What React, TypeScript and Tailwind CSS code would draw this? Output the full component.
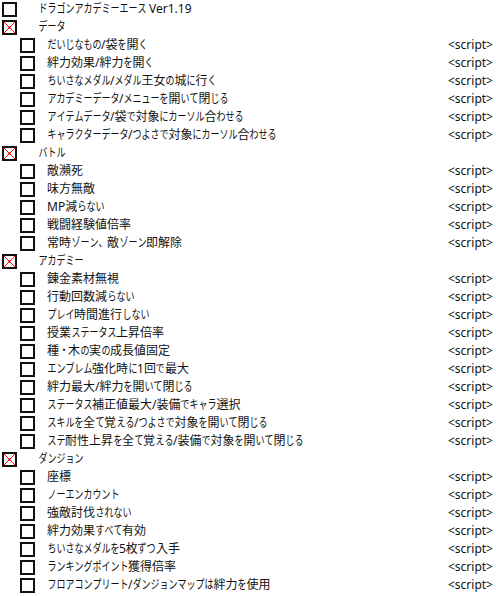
import React from "react";

const sections: { title: string; items: string[] }[] = [
  {
    title: "データ",
    items: [
      "だいじなもの/袋を開く",
      "絆力効果/絆力を開く",
      "ちいさなメダル/メダル王女の城に行く",
      "アカデミーデータ/メニューを開いて閉じる",
      "アイテムデータ/袋で対象にカーソル合わせる",
      "キャラクターデータ/つよさで対象にカーソル合わせる",
    ],
  },
  {
    title: "バトル",
    items: ["敵瀕死", "味方無敵", "MP減らない", "戦闘経験値倍率", "常時ゾーン、敵ゾーン即解除"],
  },
  {
    title: "アカデミー",
    items: [
      "錬金素材無視",
      "行動回数減らない",
      "プレイ時間進行しない",
      "授業ステータス上昇倍率",
      "種・木の実の成長値固定",
      "エンブレム強化時に1回で最大",
      "絆力最大/絆力を開いて閉じる",
      "ステータス補正値最大/装備でキャラ選択",
      "スキルを全て覚える/つよさで対象を開いて閉じる",
      "ステ耐性上昇を全て覚える/装備で対象を開いて閉じる",
    ],
  },
  {
    title: "ダンジョン",
    items: [
      "座標",
      "ノーエンカウント",
      "強敵討伐されない",
      "絆力効果すべて有効",
      "ちいさなメダルを5枚ずつ入手",
      "ランキングポイント獲得倍率",
      "フロアコンプリート/ダンジョンマップは絆力を使用",
    ],
  },
];

function isKana(ch: string) {
  const c = ch.charCodeAt(0);
  return c >= 0x3000 && c <= 0x30ff;
}

function JText({ text }: { text: string }) {
  const chars = Array.from(text);
  const out: React.ReactNode[] = [];
  let buf = "";
  chars.forEach((ch, i) => {
    if (isKana(ch)) {
      if (buf) {
        out.push(<span key={"t" + i}>{buf}</span>);
        buf = "";
      }
      out.push(
        <span key={i} className="inline-block w-[12px] -mx-[1.5px] scale-x-75">
          {ch}
        </span>
      );
    } else {
      buf += ch;
    }
  });
  if (buf) out.push(<span key="end">{buf}</span>);
  return <>{out}</>;
}

function Box({ crossed }: { crossed?: boolean }) {
  return (
    <div className="w-[15px] h-[15px] border-2 border-[#111] bg-white shrink-0 relative">
      {crossed && (
        <svg className="absolute inset-0" width="11" height="11" viewBox="0 0 11 11">
          <line x1="0" y1="0" x2="11" y2="11" stroke="#ff1010" strokeWidth="1" />
          <line x1="11" y1="0" x2="0" y2="11" stroke="#ff1010" strokeWidth="1" />
          <rect x="4.5" y="4.5" width="2" height="2" fill="#c00000" />
        </svg>
      )}
    </div>
  );
}

export default function App() {
  return (
    <div
      className="w-[496px] h-[596px] bg-white text-[12px] text-[#111] overflow-hidden"
      style={{ fontFamily: '"Noto Sans", "Noto Sans CJK JP", sans-serif' }}
    >
      <div className="flex h-[18px] items-center pl-[2px]">
        <Box />
        <span className="ml-[21px] whitespace-nowrap leading-none flex items-center">
          <JText text="ドラゴンアカデミーエース" />
          <span className="ml-[3px]">Ver1.19</span>
        </span>
      </div>
      {sections.map((s) => (
        <div key={s.title}>
          <div className="flex h-[18px] items-center pl-[2px]">
            <Box crossed />
            <span className="ml-[21px] whitespace-nowrap leading-none flex items-center">
              <JText text={s.title} />
            </span>
          </div>
          {s.items.map((it) => (
            <div key={it} className="flex h-[18px] items-center pl-[20px] pr-[3px]">
              <Box />
              <span className="ml-[12px] whitespace-nowrap leading-none flex-1 flex items-center">
                <JText text={it} />
              </span>
              <span className="whitespace-nowrap leading-none">&lt;script&gt;</span>
            </div>
          ))}
        </div>
      ))}
    </div>
  );
}
